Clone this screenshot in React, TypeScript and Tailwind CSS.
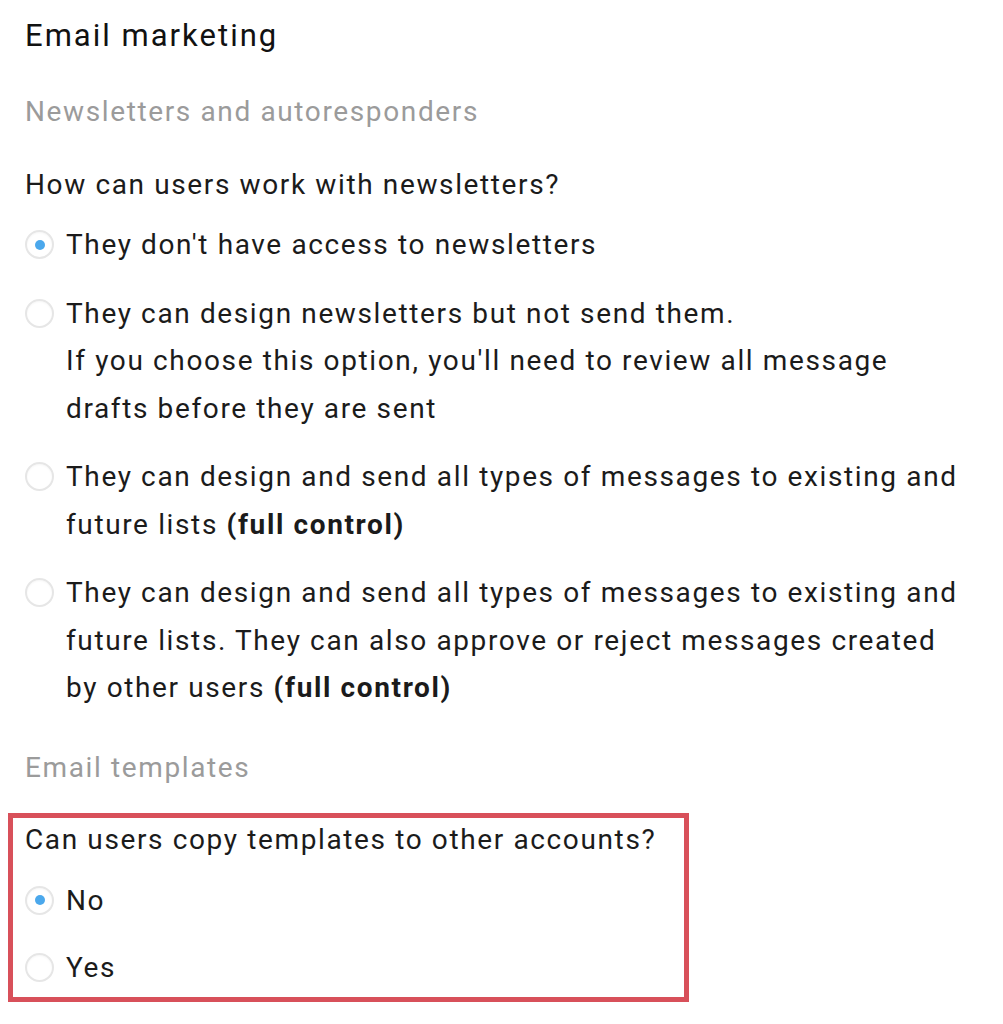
import React from "react";

type Option = { id: string; content: React.ReactNode };

const Radio = ({ checked }: { checked?: boolean }) => (
  <span className="flex h-[47.5px] shrink-0 items-center">
    <span className="flex h-[29px] w-[29px] items-center justify-center rounded-full border-2 border-[#e6e6e6] bg-white shadow-[inset_0_1px_2px_rgba(0,0,0,0.04)]">
      {checked && <span className="h-[10px] w-[10px] rounded-full bg-[#4ba8ec]" />}
    </span>
  </span>
);

const RadioRow = ({ checked, children }: { checked?: boolean; children: React.ReactNode }) => (
  <label className="flex items-start gap-[12px]">
    <Radio checked={checked} />
    <span className="text-[28px] leading-[47.5px] tracking-[0.058em] text-[#1b1b1b]">{children}</span>
  </label>
);

const newsletterOptions: Option[] = [
  { id: "none", content: "They don't have access to newsletters" },
  {
    id: "design",
    content: (
      <>
        They can design newsletters but not send them.
        <br />
        If you choose this option, you'll need to review all message drafts before they are sent
      </>
    ),
  },
  {
    id: "send",
    content: (
      <>
        They can design and send all types of messages to existing and future lists <b className="font-bold">(full control)</b>
      </>
    ),
  },
  {
    id: "approve",
    content: (
      <>
        They can design and send all types of messages to existing and future lists. They can also approve or reject
        messages created by other users <b className="font-bold">(full control)</b>
      </>
    ),
  },
];

export default function App() {
  return (
    <div className="min-h-[1024px] w-[1003px] bg-white font-['Roboto',sans-serif]">
      <div className="flex flex-col pl-[25px] pr-[35px] pt-[16px]">
        <h2 className="text-[31px] leading-[40px] tracking-[0.065em] text-[#111]">Email marketing</h2>
        <h3 className="mt-[36px] text-[28px] leading-[40px] tracking-[0.058em] text-[#9b9b9b]">
          Newsletters and autoresponders
        </h3>
        <p className="mt-[33px] text-[28px] leading-[40px] tracking-[0.058em] text-[#1b1b1b]">
          How can users work with newsletters?
        </p>

        <div className="mt-[16px] flex flex-col gap-[21px]">
          {newsletterOptions.map((opt, i) => (
            <RadioRow key={opt.id} checked={i === 0}>
              {opt.content}
            </RadioRow>
          ))}
        </div>

        <h3 className="mt-[36px] text-[28px] leading-[40px] tracking-[0.058em] text-[#9b9b9b]">Email templates</h3>

        <div className="-ml-[17px] mt-[25px] w-[681px] border-[5px] border-[#d8505a] pb-[5px] pl-[12px] pt-[2px]">
          <p className="text-[28px] leading-[40px] tracking-[0.058em] text-[#1b1b1b]">
            Can users copy templates to other accounts?
          </p>
          <div className="mt-[17px] flex flex-col gap-[20px]">
            <RadioRow checked>No</RadioRow>
            <RadioRow>Yes</RadioRow>
          </div>
        </div>
      </div>
    </div>
  );
}
